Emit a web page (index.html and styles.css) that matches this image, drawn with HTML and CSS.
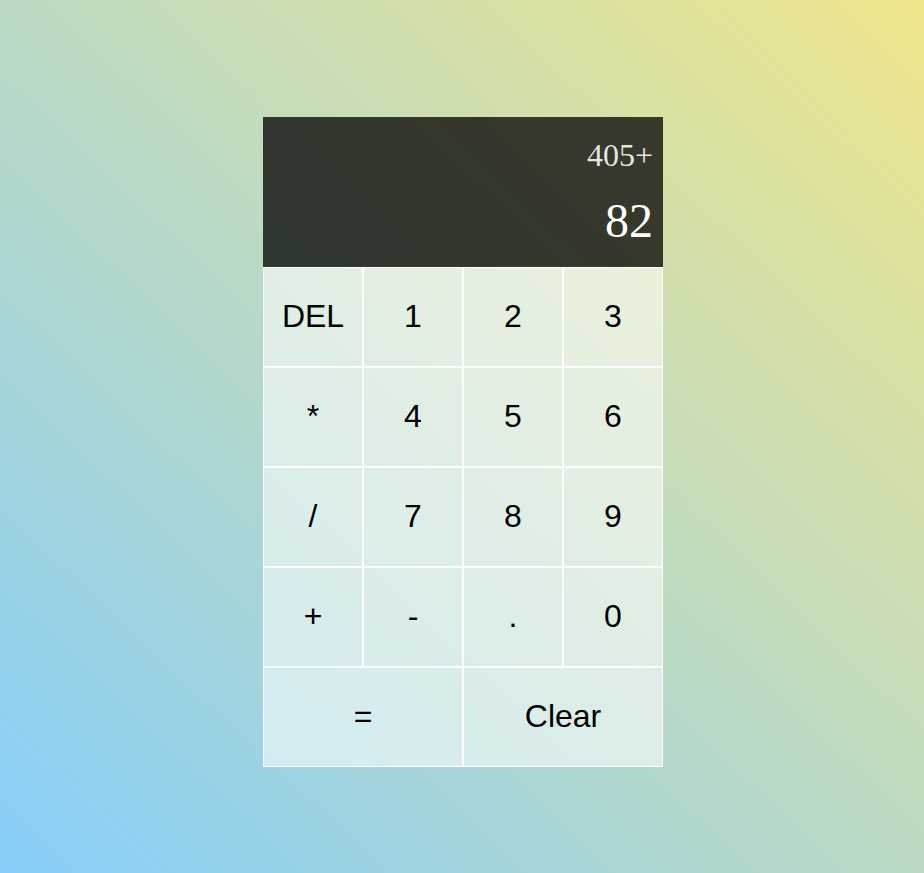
FILE: index.html
```html
<!DOCTYPE html>
<html lang="en">
<head>
<meta charset="utf-8">
<title>Calculator</title>
<link rel="stylesheet" href="styles.css">
</head>
<body>
<div class="page">
  <div class="calculator-grid">
    <div class="output">
      <div class="previous-operand">405+</div>
      <div class="current-operand">82</div>
    </div>
    <button class="key">DEL</button>
    <button class="key">1</button>
    <button class="key">2</button>
    <button class="key">3</button>
    <button class="key">*</button>
    <button class="key">4</button>
    <button class="key">5</button>
    <button class="key">6</button>
    <button class="key">/</button>
    <button class="key">7</button>
    <button class="key">8</button>
    <button class="key">9</button>
    <button class="key">+</button>
    <button class="key">-</button>
    <button class="key">.</button>
    <button class="key">0</button>
    <button class="key span-two">=</button>
    <button class="key span-two">Clear</button>
  </div>
</div>
</body>
</html>
```

FILE: styles.css
```css
*, *::before, *::after {
  box-sizing: border-box;
}

html, body {
  margin: 0;
  padding: 0;
}

body {
  min-height: 100vh;
  background: linear-gradient(to top right, #87cefa, #f0e68c);
  font-family: "Liberation Serif", "Times New Roman", serif;
}

.page {
  min-height: 100vh;
  display: flex;
  justify-content: center;
  padding: 117px 0 0 2px;
}

.calculator-grid {
  display: grid;
  grid-template-columns: repeat(4, 100px);
  grid-template-rows: 150px repeat(5, 100px);
  align-self: flex-start;
}

.key {
  font-family: "Liberation Sans", Arial, sans-serif;
  font-size: 32px;
  color: #000;
  border: 1px solid #fff;
  outline: none;
  background-color: rgba(255, 255, 255, 0.55);
  cursor: pointer;
  padding: 0 0 2px 0;
  margin: 0;
}

.span-two {
  grid-column: span 2;
}

.output {
  grid-column: 1 / -1;
  background-color: rgba(0, 0, 0, 0.75);
  display: flex;
  flex-direction: column;
  align-items: flex-end;
  justify-content: space-around;
  padding: 10px;
  word-break: break-all;
}

.previous-operand {
  color: rgba(255, 255, 255, 0.88);
  font-size: 32px;
}

.current-operand {
  color: #fff;
  font-size: 48px;
}
```
